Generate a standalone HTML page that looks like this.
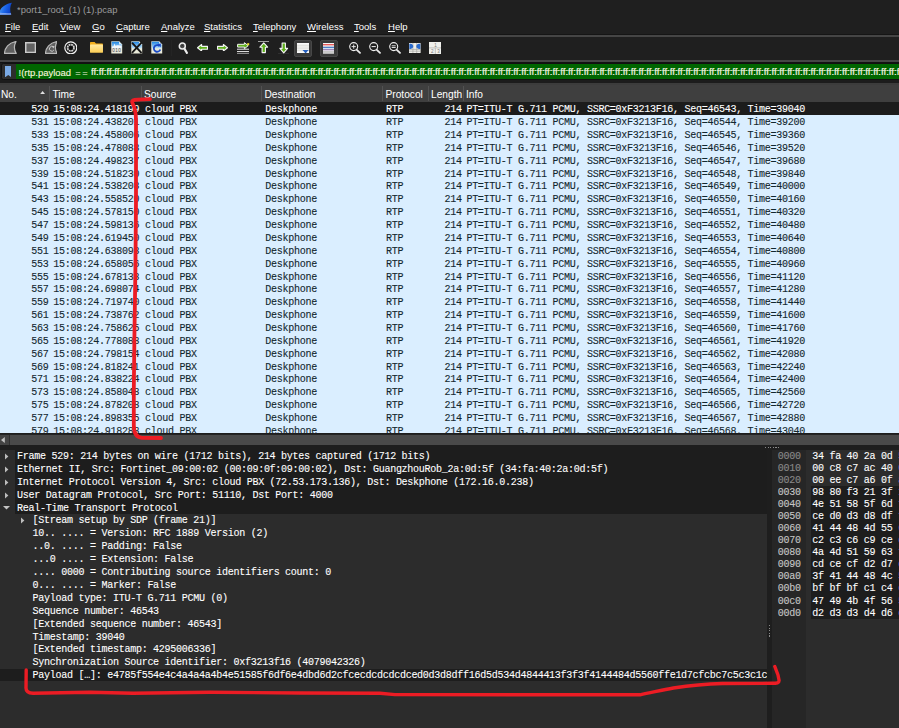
<!DOCTYPE html><html><head><meta charset="utf-8"><title>Wireshark</title><style>
*{box-sizing:border-box}
html,body{margin:0;padding:0;background:#1e1e1e;overflow:hidden}
body{width:899px;height:728px;position:relative;font-family:"Liberation Sans", sans-serif;color:#fff}
.abs{position:absolute}
.t{position:absolute;white-space:pre;line-height:1}
.mono{font-family:"Liberation Mono", monospace;font-size:10.05px;letter-spacing:-0.29px;-webkit-text-stroke:0.1px currentColor}
#title{left:0;top:0;width:899px;height:18px;background:#1f1f1f}
#menubar{left:0;top:18px;width:899px;height:17px;background:#1f1f1f}
.mi{position:absolute;top:21.5px;font-size:9.5px;white-space:pre;color:#fff;line-height:1}
.mi u{text-decoration:underline;text-underline-offset:1px;text-decoration-thickness:0.7px}
#tb{left:0;top:33.8px;width:899px;height:28.8px;background:#1f1f1f;border-top:0.5px solid #151515;border-bottom:0.6px solid #121212}
#tb:before{content:'';position:absolute;left:0;top:0px;width:899px;height:2.3px;background:#454545}
#tb:after{content:'';position:absolute;left:0;top:25.2px;width:899px;height:2.5px;background:#454545}
#filter{left:0;top:62.5px;width:899px;height:20.5px;background:#1c1c1c}
#hdr{left:0;top:85px;width:899px;height:16.8px;background:#3f3f3f}
#hline{left:0;top:83px;width:899px;height:1.6px;background:#3c3c3c}
.hc{position:absolute;top:89.5px;font-size:10.2px;color:#fff;white-space:pre;line-height:1}
.hs{position:absolute;top:85.5px;width:1px;height:15.5px;background:#525252}
#list{left:0;top:102.2px;width:899px;height:331.3px;overflow:hidden;background:#daeeff}
.row{position:absolute;left:0;width:899px;height:12.868px;color:#12272e;background:#daeeff}
.row.sel{background:#1c1c1c;color:#fff}
.row span{position:absolute;top:3.05px;white-space:pre;line-height:1}
#hscroll{left:0;top:433.5px;width:899px;height:11.5px;background:#434343;border-top:1.3px solid #242424}
#detail{left:0;top:450px;width:767.2px;height:279px;background:#2c2c2c;overflow:hidden}
.dr{position:absolute;white-space:pre;line-height:1;color:#fff}
#hex{left:771.6px;top:450px;width:128px;height:279px;background:#2c2c2c;overflow:hidden}
</style></head><body>
<div id="title" class="abs"></div>
<svg class="abs" style="left:0;top:2px" width="14" height="14" viewBox="0 0 14 14"><defs><linearGradient id="fg" x1="0" y1="0" x2="1" y2="0.3"><stop offset="0" stop-color="#4a9cf6"/><stop offset="0.55" stop-color="#1a63e8"/><stop offset="1" stop-color="#0b3fc4"/></linearGradient></defs><path d="M0 8.4 C1.5 5.4 5 2.2 11.9 0.8 C10 4 9.6 8.5 11.2 12.8 L0 12.8 Z" fill="url(#fg)"/><path d="M0 10.8 C4 11 8 11.3 11 11.2 L11.2 12.8 L0 12.8Z" fill="#8fb0f2" opacity="0.85"/></svg>
<div class="t" style="left:17.1px;top:4.6px;font-size:9.42px;color:#9c9c9c">*port1_root_(1) (1).pcap</div>
<div id="menubar" class="abs"></div>
<div class="mi" style="left:5px"><u>F</u>ile</div>
<div class="mi" style="left:32px"><u>E</u>dit</div>
<div class="mi" style="left:60px"><u>V</u>iew</div>
<div class="mi" style="left:92px"><u>G</u>o</div>
<div class="mi" style="left:116px"><u>C</u>apture</div>
<div class="mi" style="left:161px"><u>A</u>nalyze</div>
<div class="mi" style="left:204px"><u>S</u>tatistics</div>
<div class="mi" style="left:253px"><u>T</u>elephony</div>
<div class="mi" style="left:307px"><u>W</u>ireless</div>
<div class="mi" style="left:354px"><u>T</u>ools</div>
<div class="mi" style="left:388px"><u>H</u>elp</div>
<div id="tb" class="abs"></div>
<svg class="abs" style="left:4.3px;top:41px" width="12.6" height="13" viewBox="0 0 12.6 13"><path d="M0.5 12.4 C0.8 7 4.5 1.8 12 0.5 C10 4.5 9.6 8.5 12.2 12.4 Z" fill="#5f5f5f" stroke="#b8b8b8" stroke-width="1.2" stroke-linejoin="round"/></svg>
<svg class="abs" style="left:25px;top:42px" width="11.2" height="11.2" viewBox="0 0 11.2 11.2"><rect x="0.75" y="0.75" width="9.7" height="9.7" fill="#636363" stroke="#c9c9c9" stroke-width="1.5"/></svg>
<svg class="abs" style="left:44.5px;top:41px" width="12.6" height="13" viewBox="0 0 12.6 13"><path d="M0.5 12.4 C0.8 7 4.5 1.8 12 0.5 C10 4.5 9.6 8.5 12.2 12.4 Z" fill="#5f5f5f" stroke="#b8b8b8" stroke-width="1.2" stroke-linejoin="round"/><path d="M8.4 6 A2.4 2.4 0 1 0 8.9 9" fill="none" stroke="#c8c8c8" stroke-width="1"/><path d="M7 4.8L9.6 5.3L8.3 7.5Z" fill="#c8c8c8"/></svg>
<svg class="abs" style="left:63.8px;top:40.8px" width="13.6" height="13.6" viewBox="0 0 13.6 13.6"><circle cx="6.8" cy="6.8" r="6" fill="#1c1c1c" stroke="#f4f4f4" stroke-width="1.2"/><circle cx="6.8" cy="6.8" r="3.2" fill="none" stroke="#d4d4d4" stroke-width="1.7" stroke-dasharray="1.9 0.6"/><circle cx="6.8" cy="6.8" r="1.6" fill="#0c0c0c"/></svg>
<svg class="abs" style="left:90px;top:41.8px" width="13.2" height="11" viewBox="0 0 13.2 11"><defs><linearGradient id="fo" x1="0" y1="0" x2="0" y2="1"><stop offset="0" stop-color="#ffe9a3"/><stop offset="1" stop-color="#fbcd52"/></linearGradient></defs><path d="M0.8 0 H4.6 L6 1.5 H12.2 Q13 1.5 13 2.3 V4 H0 V0.8 Q0 0 0.8 0Z" fill="#f2ae1c"/><rect x="0" y="2.6" width="13" height="8.2" rx="0.9" fill="url(#fo)"/></svg>
<svg class="abs" style="left:111px;top:41px" width="11.5" height="12.8" viewBox="0 0 11.5 12.8"><defs><linearGradient id="dg111" x1="0" y1="0" x2="0" y2="1"><stop offset="0" stop-color="#1f86e4"/><stop offset="1" stop-color="#b9e0fa"/></linearGradient></defs><path d="M0.3 0.3 H8 L11.2 3.5 V12.5 H0.3 Z" fill="#e9ead9"/><path d="M0.8 0.8 H7.8 L10.7 3.7 V7.2 H0.8 Z" fill="url(#dg111)"/><path d="M8 0.3 V3.5 H11.2 Z" fill="#d6ecfb"/><path d="M1 7 V5.4 L2.6 5.2 L3.4 2.6 L4.4 4.8 L6.4 4.2 L10.6 4.6 V7Z" fill="#f4f8fb"/><text x="1.2" y="11.3" font-family="Liberation Sans, sans-serif" font-size="4.6" fill="#445" textLength="8.6">010</text></svg>
<svg class="abs" style="left:131px;top:41px" width="11.5" height="12.8" viewBox="0 0 11.5 12.8"><defs><linearGradient id="dg131" x1="0" y1="0" x2="0" y2="1"><stop offset="0" stop-color="#1f86e4"/><stop offset="1" stop-color="#b9e0fa"/></linearGradient></defs><path d="M0.3 0.3 H8 L11.2 3.5 V12.5 H0.3 Z" fill="#e9ead9"/><path d="M0.8 0.8 H7.8 L10.7 3.7 V7.2 H0.8 Z" fill="url(#dg131)"/><path d="M8 0.3 V3.5 H11.2 Z" fill="#d6ecfb"/><path d="M1.4 2.2L10 11.4M10 2.2L1.4 11.4" stroke="#161616" stroke-width="1.9" stroke-linecap="round"/></svg>
<svg class="abs" style="left:151px;top:41px" width="11.5" height="12.8" viewBox="0 0 11.5 12.8"><defs><linearGradient id="dg151" x1="0" y1="0" x2="0" y2="1"><stop offset="0" stop-color="#1f86e4"/><stop offset="1" stop-color="#b9e0fa"/></linearGradient></defs><path d="M0.3 0.3 H8 L11.2 3.5 V12.5 H0.3 Z" fill="#e9ead9"/><path d="M0.8 0.8 H7.8 L10.7 3.7 V7.2 H0.8 Z" fill="url(#dg151)"/><path d="M8 0.3 V3.5 H11.2 Z" fill="#d6ecfb"/><path d="M8.6 5.2 A3.3 3.3 0 1 0 9.3 8.4" fill="none" stroke="#1a49c4" stroke-width="1.8"/><path d="M6.2 3.1L9.9 2.6L9.6 6.3Z" fill="#1a49c4"/></svg>
<div class="abs" style="left:171px;top:40px;width:1px;height:16px;background:#242424"></div>
<svg class="abs" style="left:177.5px;top:41.5px" width="10.5" height="12.5" viewBox="0 0 10.5 12.5"><circle cx="4.3" cy="4.1" r="3" fill="#4a4a4a" stroke="#ececec" stroke-width="1.5"/><path d="M3 4.6 L4.4 3.2 L5.4 4.4" fill="none" stroke="#222" stroke-width="0.8"/><path d="M6.4 6.6L8.9 10.9" stroke="#ececec" stroke-width="2.1" stroke-linecap="round"/></svg>
<svg class="abs" style="left:197px;top:43.6px" width="11" height="7.5" viewBox="0 0 11 7.5"><path d="M0.5 3.75 L4.6 0.5 V2.3 H10.5 V5.2 H4.6 V7 Z" fill="#5fb01c" stroke="#f4f4f4" stroke-width="1.15" stroke-linejoin="round"/></svg>
<svg class="abs" style="left:217px;top:43.6px" width="11" height="7.5" viewBox="0 0 11 7.5"><g transform="translate(11,0) scale(-1,1)"><path d="M0.5 3.75 L4.6 0.5 V2.3 H10.5 V5.2 H4.6 V7 Z" fill="#5fb01c" stroke="#f4f4f4" stroke-width="1.15" stroke-linejoin="round"/></g></svg>
<svg class="abs" style="left:237px;top:41.6px" width="12.6" height="12.6" viewBox="0 0 12.6 12.6"><path d="M0 7.2H12M0 9.6H12M0 12H12" stroke="#eeeeee" stroke-width="1"/><path d="M11.2 3.7 L7.4 0.7 V2.3 H0.6 V5.1 H7.4 V6.7 Z" fill="#5fb01c" stroke="#f4f4f4" stroke-width="1" stroke-linejoin="round"/><rect x="10.2" y="1.2" width="2" height="2" fill="#f4e02a"/></svg>
<svg class="abs" style="left:257.5px;top:41.2px" width="11.5" height="12.6" viewBox="0 0 11.5 12.6"><path d="M5.75 1.8 L9.6 6.2 H7.4 V11.6 H4.1 V6.2 H1.9 Z" fill="#5fb01c" stroke="#f4f4f4" stroke-width="1.1" stroke-linejoin="round"/><rect x="0" y="0" width="11.5" height="0.7" fill="#d8d8d8"/></svg>
<svg class="abs" style="left:277.5px;top:41.6px" width="11.5" height="12.6" viewBox="0 0 11.5 12.6"><g transform="translate(0,12.6) scale(1,-1)"><path d="M5.75 1.8 L9.6 6.2 H7.4 V11.6 H4.1 V6.2 H1.9 Z" fill="#5fb01c" stroke="#f4f4f4" stroke-width="1.1" stroke-linejoin="round"/><rect x="0" y="0" width="11.5" height="0.7" fill="#d8d8d8"/></g></svg>
<div class="abs" style="left:294px;top:39.5px;width:18px;height:17px;background:#3a3a3a;border:0.7px solid #474747;border-radius:2px"></div>
<svg class="abs" style="left:297px;top:42.6px" width="12.2" height="10.8" viewBox="0 0 12.2 10.8"><rect x="0" y="0" width="12.2" height="10" fill="#e4e4e0"/><rect x="0" y="0" width="12.2" height="1.6" fill="#fbfbfb"/><path d="M0 3.9H12.2M0 6.4H12.2" stroke="#fbfbfb" stroke-width="0.6"/><rect x="0" y="8.2" width="12.2" height="1.8" fill="#fbfbfb"/><path d="M5.4 7H11.8L10.2 8.4 L8.6 10.7 L7 8.4Z" fill="#2560c0"/></svg>
<div class="abs" style="left:320px;top:39.5px;width:17.8px;height:17px;background:#3a3a3a;border:0.7px solid #474747;border-radius:2px"></div>
<svg class="abs" style="left:323px;top:42.7px" width="11.4" height="11.4" viewBox="0 0 11.4 11.4"><rect x="0" y="0" width="11.4" height="11.4" fill="#f6f6f6"/><rect x="0" y="1.1" width="11.4" height="1.4" fill="#e84a4a"/><rect x="0" y="2.5" width="11.4" height="0.9" fill="#f6d8d8"/><rect x="0" y="3.7" width="11.4" height="1.3" fill="#4f80c8"/><rect x="0" y="5" width="11.4" height="0.9" fill="#cfe0f4"/><rect x="0" y="6.4" width="11.4" height="0.8" fill="#6a3f8f"/><rect x="0" y="8.5" width="11.4" height="1" fill="#9c9c9c"/><rect x="0" y="9.5" width="11.4" height="0.8" fill="#cfcfcf"/><rect x="0" y="10.3" width="11.4" height="1.1" fill="#9c9c9c"/></svg>
<svg class="abs" style="left:348.6px;top:41.8px" width="12.5" height="12.5" viewBox="0 0 12.5 12.5"><circle cx="4.7" cy="4.6" r="4" fill="none" stroke="#efefef" stroke-width="1.1"/><path d="M2.6 4.6H6.8M4.7 2.5V6.7" stroke="#efefef" stroke-width="0.9"/><path d="M7.8 7.8L11 10.8" stroke="#ebebeb" stroke-width="1.8" stroke-linecap="round"/></svg>
<svg class="abs" style="left:368.8px;top:41.8px" width="12.5" height="12.5" viewBox="0 0 12.5 12.5"><circle cx="4.7" cy="4.6" r="4" fill="none" stroke="#efefef" stroke-width="1.1"/><path d="M2.6 4.6H6.8" stroke="#efefef" stroke-width="1"/><path d="M7.8 7.8L11 10.8" stroke="#ebebeb" stroke-width="1.8" stroke-linecap="round"/></svg>
<svg class="abs" style="left:388.8px;top:41.8px" width="12.5" height="12.5" viewBox="0 0 12.5 12.5"><circle cx="4.7" cy="4.6" r="4" fill="none" stroke="#efefef" stroke-width="1.1"/><path d="M2.7 3.8H6.7M2.7 5.5H6.7" stroke="#efefef" stroke-width="0.9"/><path d="M7.8 7.8L11 10.8" stroke="#ebebeb" stroke-width="1.8" stroke-linecap="round"/></svg>
<svg class="abs" style="left:409.2px;top:42.6px" width="11.6" height="10" viewBox="0 0 11.6 10"><rect width="11.6" height="10" fill="#eeeeea"/><path d="M0 6.4H11.6M0 8.2H11.6M3.9 0V10M7.7 0V10" stroke="#a6a6a2" stroke-width="0.7"/><path d="M0.3 0.8 H1.6 C5.2 1.4 5.2 5.4 1.6 6 H0.3Z M11.3 0.8 H10 C6.4 1.4 6.4 5.4 10 6 H11.3Z" fill="#2a6acc"/></svg>
<svg class="abs" style="left:428.7px;top:41.5px" width="12.6" height="12.2" viewBox="0 0 12.6 12.2"><rect width="12.6" height="12.2" fill="#f0f0ec"/><path d="M0 5.9H12.6M6.3 5.9V12.2" stroke="#b4b4b0" stroke-width="0.8"/><text x="5.2" y="4.9" font-family="Liberation Sans, sans-serif" font-size="4.6" fill="#777">1</text><text x="1.9" y="11" font-family="Liberation Sans, sans-serif" font-size="4.6" fill="#777">2</text><text x="8.3" y="11" font-family="Liberation Sans, sans-serif" font-size="4.6" fill="#777">3</text></svg>
<div id="filter" class="abs"></div>
<div class="abs" style="left:1.2px;top:63.2px;width:905px;height:17px;border:1px solid #111;border-radius:2.5px;background:#2d2d2d"></div>
<div class="abs" style="left:15.8px;top:64.4px;width:890px;height:14.7px;background:#006600"></div>
<svg class="abs" style="left:4.8px;top:66px" width="6.6" height="11.4" viewBox="0 0 7 12"><path d="M0 0H7V12L3.5 9.5L0 12Z" fill="#7aa9e4"/></svg>
<div class="t" style="left:18.6px;top:67.5px;font-size:9.45px;color:#f3f3dc;-webkit-text-stroke:0.15px #f3f3dc">!(rtp.payload</div>
<div class="t" style="left:75.3px;top:67.5px;font-size:9.45px;color:#f3f3dc;letter-spacing:1.5px">==</div>
<div class="t" style="left:90.9px;top:67.4px;font-size:9.6px;color:#f6f6e4;-webkit-text-stroke:0.2px #f6f6e4;width:815px;overflow:hidden">ff:ff:ff:ff:ff:ff:ff:ff:ff:ff:ff:ff:ff:ff:ff:ff:ff:ff:ff:ff:ff:ff:ff:ff:ff:ff:ff:ff:ff:ff:ff:ff:ff:ff:ff:ff:ff:ff:ff:ff:ff:ff:ff:ff:ff:ff:ff:ff:ff:ff:ff:ff:ff:ff:ff:ff:ff:ff:ff:ff:ff:ff:ff:ff:ff:ff:ff:ff:ff:ff:ff:ff:ff:ff:ff:ff:ff:ff:ff:ff:ff:ff:ff:ff:ff:ff:ff:ff:ff:ff:ff:ff:ff:ff:ff:ff:ff:ff:ff:ff:ff:ff:ff:ff:ff:ff:ff:ff:ff:ff:ff:ff:ff:ff:ff:ff:ff:ff:ff:ff</div>
<div id="hline" class="abs"></div><div id="hdr" class="abs"></div>
<div class="hc" style="left:1px">No.</div>
<div class="hc" style="left:52.5px">Time</div>
<div class="hc" style="left:144px">Source</div>
<div class="hc" style="left:264.5px">Destination</div>
<div class="hc" style="left:385.5px">Protocol</div>
<div class="hc" style="left:431px">Length</div>
<div class="hc" style="left:466px">Info</div>
<div class="hs" style="left:49px"></div>
<div class="hs" style="left:141px"></div>
<div class="hs" style="left:261px"></div>
<div class="hs" style="left:381.5px"></div>
<div class="hs" style="left:428px"></div>
<div class="hs" style="left:463px"></div>
<svg class="abs" style="left:40.2px;top:90.6px" width="5.2" height="3.2" viewBox="0 0 5.2 3.2"><path d="M0 3.2L2.6 0L5.2 3.2Z" fill="#e0e0e0"/></svg>
<div id="list" class="abs mono">
<div class="row sel" style="top:0.00px"><span style="left:31.2px">529</span><span style="left:53.2px">15:08:24.418199</span><span style="left:145px">cloud PBX</span><span style="left:265.3px">Deskphone</span><span style="left:386px">RTP</span><span style="left:444.6px">214</span><span style="left:466.4px">PT=ITU-T G.711 PCMU, SSRC=0xF3213F16, Seq=46543, Time=39040</span></div>
<div class="row" style="top:12.87px"><span style="left:31.2px">531</span><span style="left:53.2px">15:08:24.438201</span><span style="left:145px">cloud PBX</span><span style="left:265.3px">Deskphone</span><span style="left:386px">RTP</span><span style="left:444.6px">214</span><span style="left:466.4px">PT=ITU-T G.711 PCMU, SSRC=0xF3213F16, Seq=46544, Time=39200</span></div>
<div class="row" style="top:25.74px"><span style="left:31.2px">533</span><span style="left:53.2px">15:08:24.458006</span><span style="left:145px">cloud PBX</span><span style="left:265.3px">Deskphone</span><span style="left:386px">RTP</span><span style="left:444.6px">214</span><span style="left:466.4px">PT=ITU-T G.711 PCMU, SSRC=0xF3213F16, Seq=46545, Time=39360</span></div>
<div class="row" style="top:38.60px"><span style="left:31.2px">535</span><span style="left:53.2px">15:08:24.478088</span><span style="left:145px">cloud PBX</span><span style="left:265.3px">Deskphone</span><span style="left:386px">RTP</span><span style="left:444.6px">214</span><span style="left:466.4px">PT=ITU-T G.711 PCMU, SSRC=0xF3213F16, Seq=46546, Time=39520</span></div>
<div class="row" style="top:51.47px"><span style="left:31.2px">537</span><span style="left:53.2px">15:08:24.498237</span><span style="left:145px">cloud PBX</span><span style="left:265.3px">Deskphone</span><span style="left:386px">RTP</span><span style="left:444.6px">214</span><span style="left:466.4px">PT=ITU-T G.711 PCMU, SSRC=0xF3213F16, Seq=46547, Time=39680</span></div>
<div class="row" style="top:64.34px"><span style="left:31.2px">539</span><span style="left:53.2px">15:08:24.518230</span><span style="left:145px">cloud PBX</span><span style="left:265.3px">Deskphone</span><span style="left:386px">RTP</span><span style="left:444.6px">214</span><span style="left:466.4px">PT=ITU-T G.711 PCMU, SSRC=0xF3213F16, Seq=46548, Time=39840</span></div>
<div class="row" style="top:77.21px"><span style="left:31.2px">541</span><span style="left:53.2px">15:08:24.538208</span><span style="left:145px">cloud PBX</span><span style="left:265.3px">Deskphone</span><span style="left:386px">RTP</span><span style="left:444.6px">214</span><span style="left:466.4px">PT=ITU-T G.711 PCMU, SSRC=0xF3213F16, Seq=46549, Time=40000</span></div>
<div class="row" style="top:90.08px"><span style="left:31.2px">543</span><span style="left:53.2px">15:08:24.558520</span><span style="left:145px">cloud PBX</span><span style="left:265.3px">Deskphone</span><span style="left:386px">RTP</span><span style="left:444.6px">214</span><span style="left:466.4px">PT=ITU-T G.711 PCMU, SSRC=0xF3213F16, Seq=46550, Time=40160</span></div>
<div class="row" style="top:102.94px"><span style="left:31.2px">545</span><span style="left:53.2px">15:08:24.578150</span><span style="left:145px">cloud PBX</span><span style="left:265.3px">Deskphone</span><span style="left:386px">RTP</span><span style="left:444.6px">214</span><span style="left:466.4px">PT=ITU-T G.711 PCMU, SSRC=0xF3213F16, Seq=46551, Time=40320</span></div>
<div class="row" style="top:115.81px"><span style="left:31.2px">547</span><span style="left:53.2px">15:08:24.598136</span><span style="left:145px">cloud PBX</span><span style="left:265.3px">Deskphone</span><span style="left:386px">RTP</span><span style="left:444.6px">214</span><span style="left:466.4px">PT=ITU-T G.711 PCMU, SSRC=0xF3213F16, Seq=46552, Time=40480</span></div>
<div class="row" style="top:128.68px"><span style="left:31.2px">549</span><span style="left:53.2px">15:08:24.619450</span><span style="left:145px">cloud PBX</span><span style="left:265.3px">Deskphone</span><span style="left:386px">RTP</span><span style="left:444.6px">214</span><span style="left:466.4px">PT=ITU-T G.711 PCMU, SSRC=0xF3213F16, Seq=46553, Time=40640</span></div>
<div class="row" style="top:141.55px"><span style="left:31.2px">551</span><span style="left:53.2px">15:08:24.638098</span><span style="left:145px">cloud PBX</span><span style="left:265.3px">Deskphone</span><span style="left:386px">RTP</span><span style="left:444.6px">214</span><span style="left:466.4px">PT=ITU-T G.711 PCMU, SSRC=0xF3213F16, Seq=46554, Time=40800</span></div>
<div class="row" style="top:154.42px"><span style="left:31.2px">553</span><span style="left:53.2px">15:08:24.658056</span><span style="left:145px">cloud PBX</span><span style="left:265.3px">Deskphone</span><span style="left:386px">RTP</span><span style="left:444.6px">214</span><span style="left:466.4px">PT=ITU-T G.711 PCMU, SSRC=0xF3213F16, Seq=46555, Time=40960</span></div>
<div class="row" style="top:167.28px"><span style="left:31.2px">555</span><span style="left:53.2px">15:08:24.678138</span><span style="left:145px">cloud PBX</span><span style="left:265.3px">Deskphone</span><span style="left:386px">RTP</span><span style="left:444.6px">214</span><span style="left:466.4px">PT=ITU-T G.711 PCMU, SSRC=0xF3213F16, Seq=46556, Time=41120</span></div>
<div class="row" style="top:180.15px"><span style="left:31.2px">557</span><span style="left:53.2px">15:08:24.698074</span><span style="left:145px">cloud PBX</span><span style="left:265.3px">Deskphone</span><span style="left:386px">RTP</span><span style="left:444.6px">214</span><span style="left:466.4px">PT=ITU-T G.711 PCMU, SSRC=0xF3213F16, Seq=46557, Time=41280</span></div>
<div class="row" style="top:193.02px"><span style="left:31.2px">559</span><span style="left:53.2px">15:08:24.719740</span><span style="left:145px">cloud PBX</span><span style="left:265.3px">Deskphone</span><span style="left:386px">RTP</span><span style="left:444.6px">214</span><span style="left:466.4px">PT=ITU-T G.711 PCMU, SSRC=0xF3213F16, Seq=46558, Time=41440</span></div>
<div class="row" style="top:205.89px"><span style="left:31.2px">561</span><span style="left:53.2px">15:08:24.738762</span><span style="left:145px">cloud PBX</span><span style="left:265.3px">Deskphone</span><span style="left:386px">RTP</span><span style="left:444.6px">214</span><span style="left:466.4px">PT=ITU-T G.711 PCMU, SSRC=0xF3213F16, Seq=46559, Time=41600</span></div>
<div class="row" style="top:218.76px"><span style="left:31.2px">563</span><span style="left:53.2px">15:08:24.758625</span><span style="left:145px">cloud PBX</span><span style="left:265.3px">Deskphone</span><span style="left:386px">RTP</span><span style="left:444.6px">214</span><span style="left:466.4px">PT=ITU-T G.711 PCMU, SSRC=0xF3213F16, Seq=46560, Time=41760</span></div>
<div class="row" style="top:231.62px"><span style="left:31.2px">565</span><span style="left:53.2px">15:08:24.778088</span><span style="left:145px">cloud PBX</span><span style="left:265.3px">Deskphone</span><span style="left:386px">RTP</span><span style="left:444.6px">214</span><span style="left:466.4px">PT=ITU-T G.711 PCMU, SSRC=0xF3213F16, Seq=46561, Time=41920</span></div>
<div class="row" style="top:244.49px"><span style="left:31.2px">567</span><span style="left:53.2px">15:08:24.798154</span><span style="left:145px">cloud PBX</span><span style="left:265.3px">Deskphone</span><span style="left:386px">RTP</span><span style="left:444.6px">214</span><span style="left:466.4px">PT=ITU-T G.711 PCMU, SSRC=0xF3213F16, Seq=46562, Time=42080</span></div>
<div class="row" style="top:257.36px"><span style="left:31.2px">569</span><span style="left:53.2px">15:08:24.818241</span><span style="left:145px">cloud PBX</span><span style="left:265.3px">Deskphone</span><span style="left:386px">RTP</span><span style="left:444.6px">214</span><span style="left:466.4px">PT=ITU-T G.711 PCMU, SSRC=0xF3213F16, Seq=46563, Time=42240</span></div>
<div class="row" style="top:270.23px"><span style="left:31.2px">571</span><span style="left:53.2px">15:08:24.838224</span><span style="left:145px">cloud PBX</span><span style="left:265.3px">Deskphone</span><span style="left:386px">RTP</span><span style="left:444.6px">214</span><span style="left:466.4px">PT=ITU-T G.711 PCMU, SSRC=0xF3213F16, Seq=46564, Time=42400</span></div>
<div class="row" style="top:283.10px"><span style="left:31.2px">573</span><span style="left:53.2px">15:08:24.858048</span><span style="left:145px">cloud PBX</span><span style="left:265.3px">Deskphone</span><span style="left:386px">RTP</span><span style="left:444.6px">214</span><span style="left:466.4px">PT=ITU-T G.711 PCMU, SSRC=0xF3213F16, Seq=46565, Time=42560</span></div>
<div class="row" style="top:295.96px"><span style="left:31.2px">575</span><span style="left:53.2px">15:08:24.878208</span><span style="left:145px">cloud PBX</span><span style="left:265.3px">Deskphone</span><span style="left:386px">RTP</span><span style="left:444.6px">214</span><span style="left:466.4px">PT=ITU-T G.711 PCMU, SSRC=0xF3213F16, Seq=46566, Time=42720</span></div>
<div class="row" style="top:308.83px"><span style="left:31.2px">577</span><span style="left:53.2px">15:08:24.898355</span><span style="left:145px">cloud PBX</span><span style="left:265.3px">Deskphone</span><span style="left:386px">RTP</span><span style="left:444.6px">214</span><span style="left:466.4px">PT=ITU-T G.711 PCMU, SSRC=0xF3213F16, Seq=46567, Time=42880</span></div>
<div class="row" style="top:321.70px"><span style="left:31.2px">579</span><span style="left:53.2px">15:08:24.918288</span><span style="left:145px">cloud PBX</span><span style="left:265.3px">Deskphone</span><span style="left:386px">RTP</span><span style="left:444.6px">214</span><span style="left:466.4px">PT=ITU-T G.711 PCMU, SSRC=0xF3213F16, Seq=46568, Time=43040</span></div>
</div>
<div id="hscroll" class="abs"></div>
<div class="abs" style="left:9.2px;top:434.8px;width:0.9px;height:10.2px;background:#303030"></div><div class="abs" style="left:10.1px;top:434.8px;width:889px;height:10.2px;background:#4a4a4a"></div>
<svg class="abs" style="left:1.4px;top:436.6px" width="3.8" height="6" viewBox="0 0 3.8 6"><path d="M3.8 0L0 3L3.8 6Z" fill="#c0c0c0"/></svg>
<div id="detail" class="abs mono">
<div class="abs" style="left:14.7px;top:0;width:760px;height:63.5px;background:#1d1d1d"></div>
<div class="abs" style="left:0;top:218.90px;width:770px;height:12.30px;background:#1d1d1d"></div>
<div class="dr" style="left:17.1px;top:1.95px">Frame 529: 214 bytes on wire (1712 bits), 214 bytes captured (1712 bits)</div>
<svg class="abs" style="left:5.0px;top:2.80px" width="4" height="7" viewBox="0 0 4 7"><path d="M0 0.4L3.4 3.5L0 6.6Z" fill="#bdbdbd"/></svg>
<div class="dr" style="left:17.1px;top:14.85px">Ethernet II, Src: Fortinet_09:00:02 (00:09:0f:09:00:02), Dst: GuangzhouRob_2a:0d:5f (34:fa:40:2a:0d:5f)</div>
<svg class="abs" style="left:5.0px;top:15.70px" width="4" height="7" viewBox="0 0 4 7"><path d="M0 0.4L3.4 3.5L0 6.6Z" fill="#bdbdbd"/></svg>
<div class="dr" style="left:17.1px;top:27.75px">Internet Protocol Version 4, Src: cloud PBX (72.53.173.136), Dst: Deskphone (172.16.0.238)</div>
<svg class="abs" style="left:5.0px;top:28.60px" width="4" height="7" viewBox="0 0 4 7"><path d="M0 0.4L3.4 3.5L0 6.6Z" fill="#bdbdbd"/></svg>
<div class="dr" style="left:17.1px;top:40.65px">User Datagram Protocol, Src Port: 51110, Dst Port: 4000</div>
<svg class="abs" style="left:5.0px;top:41.50px" width="4" height="7" viewBox="0 0 4 7"><path d="M0 0.4L3.4 3.5L0 6.6Z" fill="#bdbdbd"/></svg>
<div class="dr" style="left:17.1px;top:53.55px">Real-Time Transport Protocol</div>
<svg class="abs" style="left:3.3px;top:56.10px" width="7" height="4" viewBox="0 0 7 4"><path d="M0 0H7L3.5 3.6Z" fill="#c4c4c4"/></svg>
<div class="dr" style="left:32.6px;top:66.45px">[Stream setup by SDP (frame 21)]</div>
<svg class="abs" style="left:20.5px;top:67.30px" width="4" height="7" viewBox="0 0 4 7"><path d="M0 0.4L3.4 3.5L0 6.6Z" fill="#bdbdbd"/></svg>
<div class="dr" style="left:32.6px;top:79.35px">10.. .... = Version: RFC 1889 Version (2)</div>
<div class="dr" style="left:32.6px;top:92.25px">..0. .... = Padding: False</div>
<div class="dr" style="left:32.6px;top:105.15px">...0 .... = Extension: False</div>
<div class="dr" style="left:32.6px;top:118.05px">.... 0000 = Contributing source identifiers count: 0</div>
<div class="dr" style="left:32.6px;top:130.95px">0... .... = Marker: False</div>
<div class="dr" style="left:32.6px;top:143.85px">Payload type: ITU-T G.711 PCMU (0)</div>
<div class="dr" style="left:32.6px;top:156.75px">Sequence number: 46543</div>
<div class="dr" style="left:32.6px;top:169.65px">[Extended sequence number: 46543]</div>
<div class="dr" style="left:32.6px;top:182.55px">Timestamp: 39040</div>
<div class="dr" style="left:32.6px;top:195.45px">[Extended timestamp: 4295006336]</div>
<div class="dr" style="left:32.6px;top:208.35px">Synchronization Source identifier: 0xf3213f16 (4079042326)</div>
<div class="dr" style="left:32.6px;top:221.25px">Payload […]: e4785f554e4c4a4a4a4b4e51585f6df6e4dbd6d2cfcecdcdcdcdced0d3d8dff16d5d534d4844413f3f3f4144484d5560ffe1d7cfcbc7c5c3c1c</div>
</div>
<div class="abs" style="left:765px;top:446.6px;width:14px;height:1px;background:repeating-linear-gradient(90deg,#8a8a8a 0 1.3px,transparent 1.3px 2.6px)"></div>
<div class="abs" style="left:769.3px;top:625px;width:1px;height:13px;background:repeating-linear-gradient(180deg,#8a8a8a 0 1.3px,transparent 1.3px 2.6px)"></div>
<div id="hex" class="abs mono">
<div class="abs" style="left:0;top:0;width:34.5px;height:279px;background:#262626"></div>
<div class="abs" style="left:39.5px;top:36.1px;width:100px;height:132.8px;background:#1d1d1d"></div>
<div class="dr" style="left:6.2px;top:2.1px;color:#8a8a8a">0000</div>
<div class="dr" style="left:40.6px;top:2.1px">34 fa 40 2a 0d <span style="color:#3f8fe0">5f</span></div>
<div class="dr" style="left:6.2px;top:14.1px;color:#8a8a8a">0010</div>
<div class="dr" style="left:40.6px;top:14.1px">00 c8 c7 ac 40 <span style="color:#3f8fe0">00</span></div>
<div class="dr" style="left:6.2px;top:26.2px;color:#8a8a8a">0020</div>
<div class="dr" style="left:40.6px;top:26.2px">00 ee c7 a6 0f <span style="color:#3f8fe0">a0</span></div>
<div class="dr" style="left:6.2px;top:38.2px;color:#c6c6c6">0030</div>
<div class="dr" style="left:40.6px;top:38.2px">98 80 f3 21 3f <span style="color:#3f8fe0">16</span></div>
<div class="dr" style="left:6.2px;top:50.2px;color:#c6c6c6">0040</div>
<div class="dr" style="left:40.6px;top:50.2px">4e 51 58 5f 6d <span style="color:#3f8fe0">f6</span></div>
<div class="dr" style="left:6.2px;top:62.2px;color:#c6c6c6">0050</div>
<div class="dr" style="left:40.6px;top:62.2px">ce d0 d3 d8 df <span style="color:#3f8fe0">f1</span></div>
<div class="dr" style="left:6.2px;top:74.3px;color:#c6c6c6">0060</div>
<div class="dr" style="left:40.6px;top:74.3px">41 44 48 4d 55 <span style="color:#3f8fe0">60</span></div>
<div class="dr" style="left:6.2px;top:86.3px;color:#c6c6c6">0070</div>
<div class="dr" style="left:40.6px;top:86.3px">c2 c3 c6 c9 ce <span style="color:#3f8fe0">d4</span></div>
<div class="dr" style="left:6.2px;top:98.3px;color:#c6c6c6">0080</div>
<div class="dr" style="left:40.6px;top:98.3px">4a 4d 51 59 63 <span style="color:#3f8fe0">f8</span></div>
<div class="dr" style="left:6.2px;top:110.4px;color:#c6c6c6">0090</div>
<div class="dr" style="left:40.6px;top:110.4px">cd ce cf d2 d7 <span style="color:#3f8fe0">dd</span></div>
<div class="dr" style="left:6.2px;top:122.4px;color:#c6c6c6">00a0</div>
<div class="dr" style="left:40.6px;top:122.4px">3f 41 44 48 4c <span style="color:#3f8fe0">52</span></div>
<div class="dr" style="left:6.2px;top:134.4px;color:#c6c6c6">00b0</div>
<div class="dr" style="left:40.6px;top:134.4px">bf bf bf c1 c4 <span style="color:#3f8fe0">c7</span></div>
<div class="dr" style="left:6.2px;top:146.5px;color:#c6c6c6">00c0</div>
<div class="dr" style="left:40.6px;top:146.5px">47 49 4b 4f 56 <span style="color:#3f8fe0">5f</span></div>
<div class="dr" style="left:6.2px;top:158.5px;color:#c6c6c6">00d0</div>
<div class="dr" style="left:40.6px;top:158.5px">d2 d3 d3 d4 d6 <span style="color:#3f8fe0">d9</span></div>
</div>
<svg class="abs" style="left:0;top:0" width="899" height="728" viewBox="0 0 899 728" fill="none" stroke="#ec1c24" stroke-linecap="round" stroke-linejoin="round">
<path stroke-width="3.8" d="M150 99.2 L138 99.6 C133 99.8 131.5 100.5 132.5 103 C135 108 136 112 136 120 L136 200 L135.4 270 L134.5 330 L133.8 390 L133.8 425 C133.8 433 136 437.5 142 437.8 L161 438"/>
<path stroke-width="3.4" d="M26.2 670 L26 688 C26 691.5 28 693 33 693.3 L90 692.3 L133 693.2 L210 692.2 L300 693 L380 693.3 L395 694.6 L600 694.8 L640 694.8 C652 692.5 662 690 673.4 688 C690 685.5 705 684 722.4 683.5 L771.3 683.3 C777 683.3 779.5 683 779 680 L778 675 L774.8 666.5"/>
</svg>
</body></html>
